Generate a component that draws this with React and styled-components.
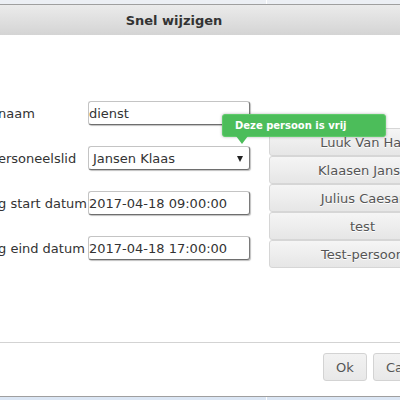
import React from "react";
import styled, { createGlobalStyle } from "styled-components";

const Global = createGlobalStyle`
  html, body { margin: 0; padding: 0; }
  body {
    width: 400px;
    height: 400px;
    overflow: hidden;
    font-family: "DejaVu Sans", Verdana, sans-serif;
    font-size: 13px;
    color: #333;
  }
`;

const Page = styled.div`
  position: relative;
  height: 400px;
  display: grid;
  grid-template-columns: 266px 1fr;
  column-gap: 1px;
  background: #fff;
  overflow: hidden;
`;

const Pane = styled.div`
  background: linear-gradient(#eceff4 0 40px, #dbe6f4 40px);
`;

const Dialog = styled.div`
  position: absolute;
  top: 4px;
  left: -126px;
  width: 600px;
  height: 393px;
  box-sizing: border-box;
  border: 1px solid #9f9f9f;
  background: #fff;
  display: flex;
  flex-direction: column;
`;

const TitleBar = styled.div`
  height: 30px;
  flex: none;
  display: flex;
  align-items: center;
  justify-content: center;
  background: linear-gradient(#ebebeb, #d4d4d4);
  font-weight: bold;
  font-size: 13px;
  color: #333;
`;

const Content = styled.div`
  flex: 1;
  display: flex;
  align-items: flex-start;
  padding: 66px 0 0 123px;
`;

const Form = styled.div`
  display: grid;
  grid-template-columns: 90px 162px;
  grid-auto-rows: 24px;
  row-gap: 21px;
`;

const Label = styled.div`
  align-self: center;
  white-space: nowrap;
  color: #333;
  font-size: 13px;
`;

const Field = styled.div`
  position: relative;
`;

const TextInput = styled.input`
  box-sizing: border-box;
  width: 100%;
  height: 24px;
  margin: 0;
  padding: 0;
  border: 1px solid #c4c4c4;
  border-right-color: #7a7a7a;
  border-bottom-color: #6e6e6e;
  border-radius: 3px;
  box-shadow: 1px 1px 1px rgba(0, 0, 0, 0.25);
  background: #fff;
  font-family: "DejaVu Sans", Verdana, sans-serif;
  font-size: 13px;
  color: #333;
  outline: none;
`;

const SelectBox = styled.div`
  box-sizing: border-box;
  height: 24px;
  display: flex;
  align-items: center;
  justify-content: space-between;
  padding: 0 6px 0 4px;
  border: 1px solid #c4c4c4;
  border-right-color: #7a7a7a;
  border-bottom-color: #6e6e6e;
  border-radius: 3px;
  box-shadow: 1px 1px 1px rgba(0, 0, 0, 0.25);
  background: #fff;
  color: #333;
`;

const Caret = styled.span`
  width: 0;
  height: 0;
  border-left: 3px solid transparent;
  border-right: 3px solid transparent;
  border-top: 6px solid #222;
  margin-top: 1px;
`;

const Tooltip = styled.div`
  position: absolute;
  left: 134px;
  top: -32px;
  width: 164px;
  height: 23px;
  box-sizing: border-box;
  padding-left: 12px;
  display: flex;
  align-items: center;
  background: #4cbd5a;
  border: 1px solid #5fcb6b;
  border-radius: 3px;
  box-shadow: 0 0 3px rgba(0, 0, 0, 0.3);
  color: #fff;
  font-weight: bold;
  font-size: 10px;
  z-index: 2;
  &::after {
    content: "";
    position: absolute;
    left: 13px;
    top: 100%;
    border-left: 6px solid transparent;
    border-right: 6px solid transparent;
    border-top: 8px solid #4cbd5a;
  }
`;

const PersonList = styled.div`
  margin: 27px 0 0 19px;
  width: 187px;
  flex: none;
  display: flex;
  flex-direction: column;
`;

const PersonButton = styled.div`
  box-sizing: border-box;
  height: 28px;
  display: flex;
  align-items: center;
  justify-content: center;
  white-space: nowrap;
  border: 1px solid #d6d6d6;
  border-radius: 3px;
  background: linear-gradient(#f5f5f5, #e6e6e6);
  color: #555;
  font-size: 13px;
  text-shadow: 0 1px 0 #fff;
`;

const ButtonPane = styled.div`
  height: 54px;
  flex: none;
  box-sizing: border-box;
  border-top: 1px solid #d3d3d3;
  display: flex;
  justify-content: flex-end;
  align-items: flex-start;
  gap: 6px;
  padding: 10px 30px 0 0;
`;

const DialogButton = styled.div`
  box-sizing: border-box;
  height: 28px;
  width: ${(p) => p.$w}px;
  display: flex;
  align-items: center;
  justify-content: center;
  border: 1px solid #d3d3d3;
  border-radius: 3px;
  background: linear-gradient(#f2f2f2, #e8e8e8);
  color: #555;
  font-size: 13px;
`;

const people = ["Luuk Van Hal", "Klaasen Jansz", "Julius Caesar", "test", "Test-persoon"];

export default function App() {
  return (
    <>
      <Global />
      <Page>
        <Pane />
        <Pane />
        <Dialog>
          <TitleBar>Snel wijzigen</TitleBar>
          <Content>
            <Form>
              <Label>naam</Label>
              <Field>
                <TextInput readOnly value="dienst" />
              </Field>
              <Label>ersoneelslid</Label>
              <Field>
                <Tooltip>Deze persoon is vrij</Tooltip>
                <SelectBox>
                  <span>Jansen Klaas</span>
                  <Caret />
                </SelectBox>
              </Field>
              <Label>g start datum</Label>
              <Field>
                <TextInput readOnly value="2017-04-18 09:00:00" />
              </Field>
              <Label>g eind datum</Label>
              <Field>
                <TextInput readOnly value="2017-04-18 17:00:00" />
              </Field>
            </Form>
            <PersonList>
              {people.map((p) => (
                <PersonButton key={p}>{p}</PersonButton>
              ))}
            </PersonList>
          </Content>
          <ButtonPane>
            <DialogButton $w={44}>Ok</DialogButton>
            <DialogButton $w={70}>Cancel</DialogButton>
          </ButtonPane>
        </Dialog>
      </Page>
    </>
  );
}
